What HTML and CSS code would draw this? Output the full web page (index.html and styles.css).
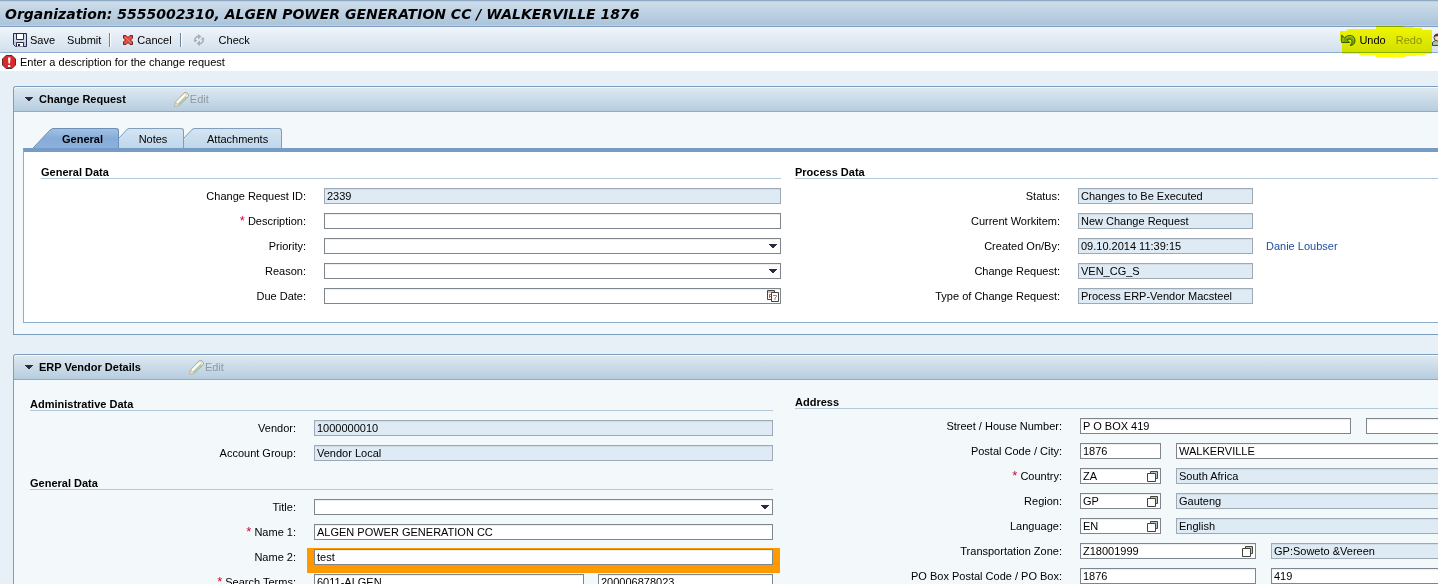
FILE: index.html
```html
<!DOCTYPE html>
<html lang="en">
<head>
<meta charset="utf-8">
<title>Organization: 5555002310</title>
<link rel="stylesheet" href="styles.css">
</head>
<body>
<svg class="defs" aria-hidden="true">
  <defs>
    <linearGradient id="tab-on" x1="0" y1="0" x2="0" y2="1"><stop offset="0" stop-color="#a3c1e0"/><stop offset=".5" stop-color="#85add8"/><stop offset="1" stop-color="#8db0db"/></linearGradient>
    <linearGradient id="tab-off" x1="0" y1="0" x2="0" y2="1"><stop offset="0" stop-color="#d5e4f1"/><stop offset="1" stop-color="#bfd7eb"/></linearGradient>
  </defs>
  <symbol id="arrow" viewBox="0 0 8 4"><path d="M0 0h8v1H7v1H6v1H5v1H3V3H2V2H1V1H0z" fill="#2b2b47"/></symbol>
  <symbol id="help" viewBox="0 0 11 11"><path d="M3.500 3V.5h7v7H8" fill="#b5c3c3" stroke="#44443c"/><path d="M.5 2.500h8v8h-8z" fill="#fff" stroke="#44443c"/></symbol>
  <symbol id="pencil" viewBox="0 0 15 15"><path d="M.5 14.500l1-4.500L10.500.5h2l2 2v2L5 13.500z" fill="#cfe0c8" stroke="#a9aaa2"/><path d="M3 10.500l8-8" stroke="#fff" stroke-width="2"/><path d="M4.500 12.500L13 4" stroke="#a9c6a3" stroke-width="1.500"/><path d="M10.500 1.500l3 3" stroke="#f6e2d8" stroke-width="2"/><path d="M.5 14.500l1-4 3.500 3z" fill="#f3d6c0" stroke="#d0b7a3" stroke-width=".5"/></symbol>
</svg>
<div class="app">
  <header class="titlebar"><h1>Organization: 5555002310, ALGEN POWER GENERATION CC / WALKERVILLE 1876</h1></header>

  <div class="toolbar" role="toolbar" aria-label="Actions">
    <button class="tool"><svg width="14" height="14" viewBox="0 0 14 14"><path d="M.5.5h13v13h-11l-2-2z" fill="#b9cbe0" stroke="#292a43"/><path d="M3.500.5h7v6h-7z" fill="#fff" stroke="#292a43"/><path d="M2 1v7h10V1" fill="none" stroke="#dfe9f3"/><path d="M3.500 13.500v-4h7v4" fill="#fff" stroke="#292a43"/><path d="M5 11h2v2H5z" fill="#292a43"/></svg>Save</button>
    <button class="tool">Submit</button>
    <span class="sep"></span>
    <button class="tool"><svg width="12" height="12" viewBox="0 0 12 12"><path d="M1.500 1.500h2.500l2 2 2-2h2.500V4l-2 2 2 2v2.500H8l-2-2-2 2H1.500V8l2-2-2-2z" fill="#f04a3c" stroke="#6a2628"/><path d="M3 3l6 6" stroke="#ff796a"/></svg>Cancel</button>
    <span class="sep"></span>
    <button class="tool check"><svg width="12" height="12" viewBox="0 0 11 12"><path d="M1.500 7V4.500l2-2H5M9.500 5v2.500l-2 2H6" fill="none" stroke="#a9adb4" stroke-width="1.500"/><path d="M4.500 0L8 2.500 4.500 5.500zM6.500 6.500L3 9.500 6.500 12zM0 6h4L1.500 8.500zM7 5.500h4L9.500 3z" fill="#a9adb4"/></svg>Check</button>
    <div class="history">
      <button class="tool"><svg width="15" height="14" viewBox="0 0 15 14"><path d="M.7 2v7.500h8L6 6.800c2.500-1.500 5-.3 5 2.200 0 1.500-1 2.700-2 3.500 3 0 5-2 5-5 0-5-6-7-10.500-2.700z" fill="#77a83b" stroke="#3b5829"/><path d="M5 5c3-2.500 7-1.500 8 1.500M2 4.500v4" fill="none" stroke="#b2d267"/></svg>Undo</button>
      <button class="tool" disabled>Redo</button>
      <button class="tool person" aria-label="Personalize"><svg width="14" height="14" viewBox="0 0 14 14"><path d="M.5 12.500v-3l3-2h5l3 5z" fill="#a6c99a" stroke="#3c4938"/><circle cx="5.500" cy="4.500" r="3.500" fill="#f5d6b5" stroke="#57352b"/><path d="M2 4l2-3h4l2 3-4-1z" fill="#57352b"/></svg></button>
      <svg class="marker" width="94" height="34" viewBox="0 0 94 34"><path d="M0 7h6l2-2h28V2h28v1h10v1h8v2h10v24H85v1h-9v1H66v1H36v-2H19v-1H2V17H0z" fill="#ff0"/></svg>
    </div>
  </div>

  <div class="message" role="alert"><svg width="14" height="14" viewBox="0 0 14 14"><path d="M4 .5h6L13.500 4v6L10 13.500H4L.5 10V4z" fill="#db2929" stroke="#5e2a32"/><path d="M6 2.500h2.500L8 8.500H6.500zM6 10h2.300v2H6z" fill="#fff"/></svg>Enter a description for the change request</div>

  <main>
    <section class="panel">
      <header class="panel-head">
        <svg width="8" height="4"><use href="#arrow"/></svg><h2>Change Request</h2>
        <button class="edit" disabled><svg width="15" height="15"><use href="#pencil"/></svg>Edit</button>
      </header>
      <div class="panel-tabs">
        <div class="tabs" role="tablist">
          <button class="tab on" role="tab" aria-selected="true"><svg width="20" height="20" viewBox="0 0 20 20"><path d="M0 20L17 2l3-2v20z" fill="url(#tab-on)"/><path d="M0 20L17 2l3-1.500" fill="none" stroke="#7494bb"/></svg><span>General</span></button>
          <button class="tab" role="tab"><svg width="10" height="20" viewBox="0 0 10 20"><path d="M0 10L8 1l2-1v20H0z" fill="url(#tab-off)"/><path d="M0 10L8 1.500l2-1" fill="none" stroke="#819fbd"/></svg><span>Notes</span></button>
          <button class="tab wide" role="tab"><svg width="10" height="20" viewBox="0 0 10 20"><path d="M0 10L8 1l2-1v20H0z" fill="url(#tab-off)"/><path d="M0 10L8 1.500l2-1" fill="none" stroke="#819fbd"/></svg><span>Attachments</span></button>
        </div>
        <div class="tab-page">
          <div class="columns request">
            <div class="group">
              <h3>General Data</h3>
              <div class="row"><label for="crid">Change Request ID:</label><input id="crid" value="2339" readonly></div>
              <div class="row"><label for="desc"><b>*</b> Description:</label><input id="desc"></div>
              <div class="row"><label for="prio">Priority:</label><div class="control"><select id="prio"><option></option></select><svg width="8" height="4"><use href="#arrow"/></svg></div></div>
              <div class="row"><label for="reason">Reason:</label><div class="control"><select id="reason"><option></option></select><svg width="8" height="4"><use href="#arrow"/></svg></div></div>
              <div class="row"><label for="due">Due Date:</label><div class="control date"><input id="due"><svg width="12" height="12" viewBox="0 0 12 12"><path d="M.5.5h7v9h-7z" fill="#fff" stroke="#44443c"/><path d="M1 2h6M2 4.500h3M2 6.500h3M2.500 4v4" stroke="#a77e6c"/><path d="M4.500 2.500h7v9h-7z" fill="#fff" stroke="#44443c"/><path d="M6 5.500h3.500v1L8 8v2" fill="none" stroke="#a77e6c"/></svg></div></div>
            </div>
            <div class="group">
              <h3>Process Data</h3>
              <div class="row short"><label for="status">Status:</label><input id="status" value="Changes to Be Executed" readonly></div>
              <div class="row short"><label for="item">Current Workitem:</label><input id="item" value="New Change Request" readonly></div>
              <div class="row short"><label for="created">Created On/By:</label><input id="created" value="09.10.2014 11:39:15" readonly><a href="#">Danie Loubser</a></div>
              <div class="row short"><label for="cr">Change Request:</label><input id="cr" value="VEN_CG_S" readonly></div>
              <div class="row short"><label for="type">Type of Change Request:</label><input id="type" value="Process ERP-Vendor Macsteel" readonly></div>
            </div>
          </div>
        </div>
      </div>
    </section>

    <section class="panel">
      <header class="panel-head">
        <svg width="8" height="4"><use href="#arrow"/></svg><h2>ERP Vendor Details</h2>
        <button class="edit" disabled><svg width="15" height="15"><use href="#pencil"/></svg>Edit</button>
      </header>
      <div class="columns vendor">
        <div class="stack">
          <div class="group">
            <h3>Administrative Data</h3>
            <div class="row"><label for="vendor">Vendor:</label><input id="vendor" value="1000000010" readonly></div>
            <div class="row"><label for="acct">Account Group:</label><input id="acct" value="Vendor Local" readonly></div>
          </div>
          <div class="group">
            <h3>General Data</h3>
            <div class="row"><label for="title">Title:</label><div class="control"><select id="title"><option></option></select><svg width="8" height="4"><use href="#arrow"/></svg></div></div>
            <div class="row"><label for="name1"><b>*</b> Name 1:</label><input id="name1" value="ALGEN POWER GENERATION CC"></div>
            <div class="row"><label for="name2">Name 2:</label><div class="flagged"><input id="name2" value="test"></div></div>
            <div class="row"><label for="term1"><b>*</b> Search Terms:</label><div class="terms"><input id="term1" value="6011-ALGEN"><input aria-label="Search term 2" value="200006878023"></div></div>
          </div>
        </div>
        <div class="group address">
          <h3>Address</h3>
          <div class="row"><label for="street">Street / House Number:</label><div class="pair street"><input id="street" value="P O BOX 419"><input aria-label="House number"></div></div>
          <div class="row"><label for="postal">Postal Code / City:</label><div class="pair"><input id="postal" value="1876"><input aria-label="City" value="WALKERVILLE"></div></div>
          <div class="row"><label for="country"><b>*</b> Country:</label><div class="pair"><div class="control pick"><input id="country" value="ZA"><svg width="11" height="11"><use href="#help"/></svg></div><input aria-label="Country name" value="South Africa" readonly></div></div>
          <div class="row"><label for="region">Region:</label><div class="pair"><div class="control pick"><input id="region" value="GP"><svg width="11" height="11"><use href="#help"/></svg></div><input aria-label="Region name" value="Gauteng" readonly></div></div>
          <div class="row"><label for="lang">Language:</label><div class="pair"><div class="control pick"><input id="lang" value="EN"><svg width="11" height="11"><use href="#help"/></svg></div><input aria-label="Language name" value="English" readonly></div></div>
          <div class="row"><label for="zone">Transportation Zone:</label><div class="pair zone"><div class="control pick"><input id="zone" value="Z18001999"><svg width="11" height="11"><use href="#help"/></svg></div><input aria-label="Zone name" value="GP:Soweto &amp;Vereen" readonly></div></div>
          <div class="row"><label for="pobox">PO Box Postal Code / PO Box:</label><div class="pair zone"><input id="pobox" value="1876"><input aria-label="PO Box" value="419"></div></div>
        </div>
      </div>
    </section>
  </main>
</div>
</body>
</html>
```
FILE: styles.css
```css
* { box-sizing: border-box; }
body { margin: 0; background: #e8f0f7; }
body, button, input, select { font: 11px/16px "Liberation Sans", Arial, sans-serif; color: #000; }
h1, h2, h3 { margin: 0; font-size: 11px; }
button { padding: 0; border: 0; background: none; }
svg { display: block; flex: none; }
.defs { position: absolute; width: 0; height: 0; }
.app { height: 100vh; overflow: hidden; }

.titlebar {
  height: 27px;
  padding: 3px 5px 0;
  border-top: 1px solid #8ea9c6;
  border-bottom: 1px solid #7f9ebf;
  background: linear-gradient(#cfdde9, #a9c3da);
  box-shadow: inset 0 1px #c2d0df, inset 0 -1px #bdd1e4;
}
.titlebar h1 { font: italic bold 14px/20px Verdana, "DejaVu Sans", sans-serif; white-space: nowrap; }

.toolbar {
  display: flex;
  align-items: center;
  height: 26px;
  padding-left: 13px;
  border-bottom: 1px solid #8badcf;
  background: linear-gradient(#f0f5fb, #d2e0ec);
}
.tool { display: flex; align-items: center; gap: 3px; margin-right: 12px; }
.tool:disabled { color: #8e9499; }
.sep { width: 2px; height: 14px; margin-right: 11px; border-left: 1px solid #6f8399; border-right: 1px solid #fff; }
.tool + .sep { margin-left: -4px; }
.check { gap: 14px; }
.history { position: relative; display: flex; margin: 0 -8px 0 auto; }
.history .tool { margin-right: 10px; }
.history .person { margin: 0; }
.marker { position: absolute; top: -8px; left: -1px; mix-blend-mode: multiply; pointer-events: none; }

.message { display: flex; align-items: center; gap: 4px; height: 18px; padding-left: 2px; background: #fff; }

main { display: grid; gap: 19px; padding: 15px 0 0 13px; }
.panel { border: 1px solid #7d9fbf; border-right: 0; border-radius: 3px 0 0; background: #f3f8fb; }
.panel-head {
  display: flex;
  align-items: center;
  height: 25px;
  padding-left: 11px;
  border-bottom: 1px solid #8badcb;
  border-radius: 3px 0 0;
  background: linear-gradient(#dfe9f1, #b6cddf);
  box-shadow: inset 0 1px #f5f9fc;
}
.panel-head h2 { margin: 0 48px 0 6px; }
.edit { display: flex; align-items: center; gap: 1px; color: #8e9aa6; }

.panel-tabs { padding: 16px 0 11px 9px; }
.tabs { display: flex; padding-left: 10px; }
.tab { display: flex; height: 20px; }
.tab span {
  min-width: 55px;
  padding: 2px 15px 1px 9px;
  border-top: 1px solid #819fbd;
  border-right: 1px solid #819fbd;
  border-radius: 0 3px 0 0;
  background: linear-gradient(#d5e4f1, #bfd7eb);
}
.tab.wide span { padding: 2px 13px 1px 13px; }
.tab.on span { min-width: 66px; border-color: #6b8fbb; background: linear-gradient(#a3c1e0, #85add8 50%, #8db0db); font-weight: bold; }
.tab-page { padding: 13px 0 18px 17px; border: 1px solid #8badcf; border-width: 4px 0 1px 1px; border-top-color: #769bc5; background: #fff; }

.columns { display: grid; align-items: start; }
.request { grid-template-columns: minmax(0, 740fr) minmax(0, 643fr); gap: 14px; }
.vendor { grid-template-columns: minmax(0, 743fr) minmax(0, 643fr); gap: 22px; padding: 15px 0 16px 16px; }
.stack, .group { display: grid; gap: 9px; }
.stack { gap: 15px; padding-top: 2px; }
.group h3 { height: 14px; border-bottom: 1px solid #b3c9d9; line-height: 14px; }
.row { display: grid; grid-template-columns: 265px minmax(0, 1fr); gap: 18px; }
.vendor .row { grid-template-columns: 266px minmax(0, 1fr); }
.vendor .address .row { grid-template-columns: 267px minmax(0, 1fr); }
.short { grid-template-columns: 265px 175px auto; justify-content: start; }
.short a { margin-left: -5px; color: #1f50a0; text-decoration: none; }
label { text-align: right; white-space: nowrap; }
label b { color: #d9002f; font-size: 13px; font-weight: normal; line-height: 12px; }

input, select {
  display: block;
  width: 100%;
  min-width: 0;
  height: 16px;
  padding: 0 2px;
  border: 1px solid #7f858c;
  border-radius: 0;
  background: #fff;
  box-shadow: inset 0 1px 1px #eceef0;
  line-height: 14px;
  appearance: none;
}
input:read-only { border-color: #9daab6; background: #deebf5; box-shadow: inset 0 1px 1px #d0dde7; }
.control { position: relative; }
.control svg { position: absolute; top: 6px; right: 4px; pointer-events: none; }
.control.date svg { top: 2px; right: 2px; }
.control.pick svg { top: 3px; right: 3px; }
.flagged { margin: -1px -7px -8px; padding: 1px 7px 8px; background: #f90; }
.terms { display: grid; grid-template-columns: 270fr 175fr; gap: 14px; }
.pair { display: grid; grid-template-columns: 81px minmax(0, 1fr); gap: 15px; margin-right: -2px; }
.street { grid-template-columns: 271px minmax(0, 1fr); }
.zone { grid-template-columns: 176px minmax(0, 1fr); }
```
